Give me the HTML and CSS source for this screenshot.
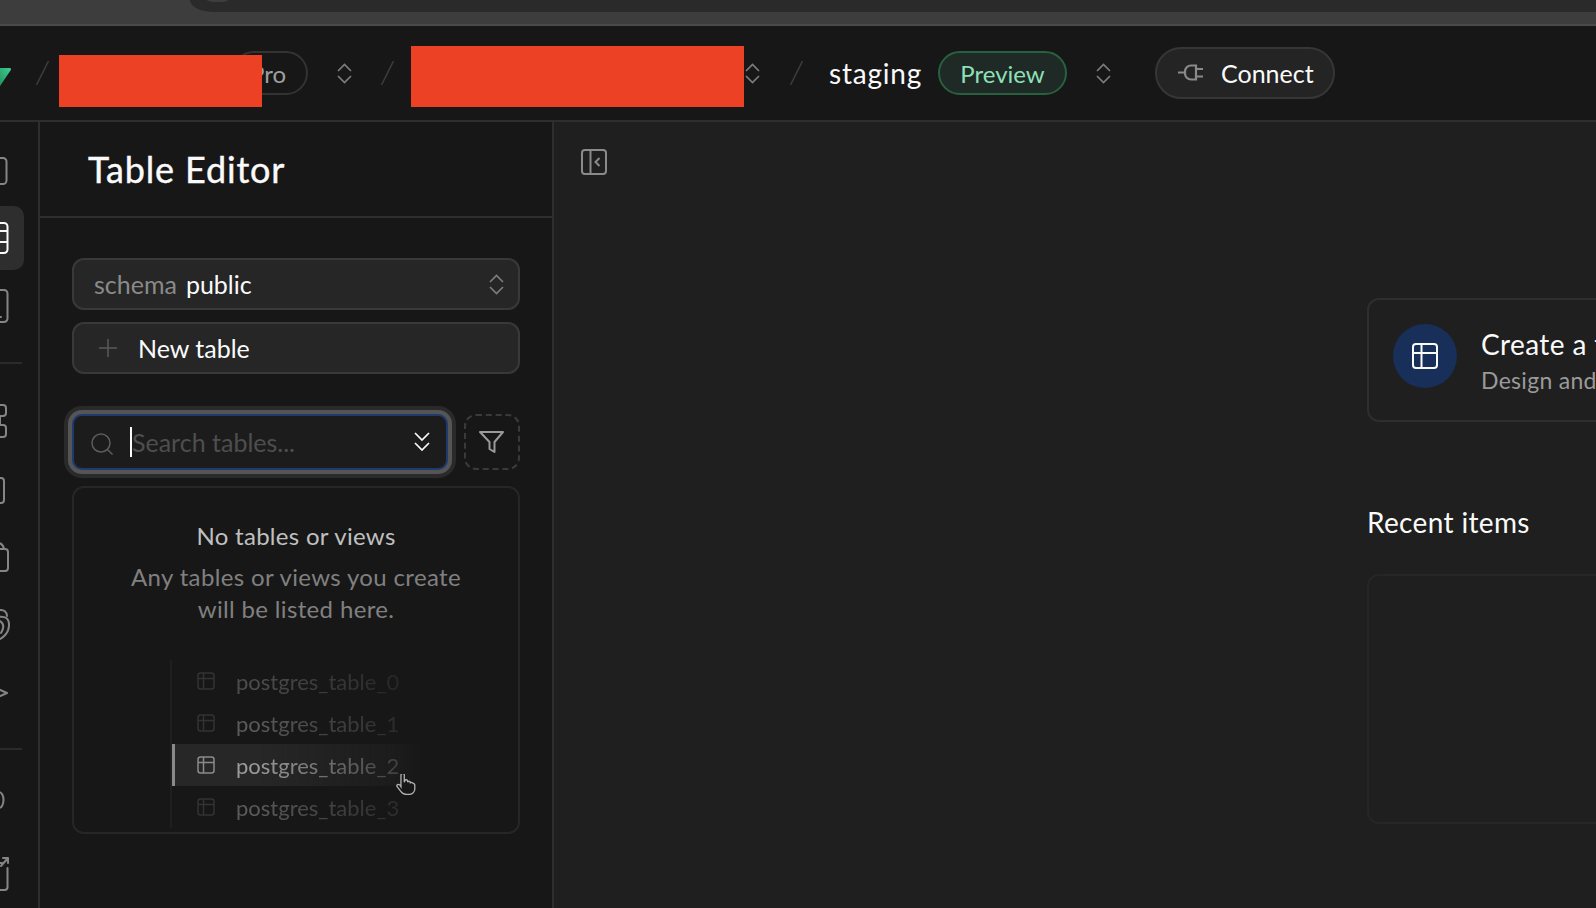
FILE: index.html
```html
<!DOCTYPE html>
<html lang="en">
<head>
<meta charset="utf-8">
<title>Table Editor</title>
<link rel="stylesheet" href="styles.css">
</head>
<body>
<div class="chrome"><div class="chrome-pill"></div></div>
<header class="topbar">
  <svg class="logo" viewBox="0 0 11 18"><defs><linearGradient id="g" x1="0" y1="1" x2="1" y2="0"><stop offset="0" stop-color="#249361"/><stop offset="1" stop-color="#3ecf8e"/></linearGradient></defs><path d="M0 0H9.500Q12 0 10.500 2.500L0 18Z" fill="url(#g)"/></svg>
  <svg class="slash slash-a" viewBox="0 0 13 24"><path d="M12.500 0L.5 24"/></svg>
  <span class="pill pill-pro">Pro</span>
  <svg class="updown updown-a" viewBox="0 0 15 21"><path d="M1 8L7.500 1.500L14 8M1 13L7.500 19.500L14 13"/></svg>
  <svg class="slash slash-b" viewBox="0 0 13 24"><path d="M12.500 0L.5 24"/></svg>
  <svg class="updown updown-b" viewBox="0 0 15 21"><path d="M1 8L7.500 1.500L14 8M1 13L7.500 19.500L14 13"/></svg>
  <svg class="slash slash-c" viewBox="0 0 13 24"><path d="M12.500 0L.5 24"/></svg>
  <span class="branch">staging</span>
  <span class="pill pill-preview">Preview</span>
  <svg class="updown updown-c" viewBox="0 0 15 21"><path d="M1 8L7.500 1.500L14 8M1 13L7.500 19.500L14 13"/></svg>
  <button class="connect">
    <svg class="plug" viewBox="0 0 26 18"><path d="M0 8.500H7M18 1.500H13a6 6 0 0 0-6 6v2a6 6 0 0 0 6 6h5zM18 5H25M18 12.500H25"/></svg>
    <span>Connect</span>
  </button>
  <div class="redact redact-a"></div>
  <div class="redact redact-b"></div>
</header>
<div class="layout">
  <nav class="rail">
    <div class="rail-group">
      <div class="rail-item"><svg class="rail-icon" viewBox="0 0 10 40"><path d="M-2 7H3a3.500 3.500 0 0 1 3.500 3.500V29.500a3.500 3.500 0 0 1-3.500 3.500H-2"/></svg></div>
      <div class="rail-item is-active"><svg class="rail-icon" viewBox="0 0 10 40"><path d="M-2 5H4a3.500 3.500 0 0 1 3.500 3.500V31.500a3.500 3.500 0 0 1-3.500 3.500H-2M-2 13H7.500M-2 24H7.500"/></svg></div>
      <div class="rail-item"><svg class="rail-icon" viewBox="0 0 10 40"><path d="M-2 5H4a3.500 3.500 0 0 1 3.500 3.500V33.500a3.500 3.500 0 0 1-3.500 3.500H-2M-1 32H1"/></svg></div>
    </div>
    <div class="rail-sep rail-sep-a"></div>
    <div class="rail-group rail-group-wide">
      <div class="rail-item"><svg class="rail-icon" viewBox="0 0 10 40"><path d="M0 4H3a3 3 0 0 1 3 3V12a3 3 0 0 1-3 3H0M0 15V24M0 24H3a3 3 0 0 1 3 3V33a3 3 0 0 1-3 3H0"/></svg></div>
      <div class="rail-item"><svg class="rail-icon" viewBox="0 0 10 40"><path d="M-2 9H1a3 3 0 0 1 3 3V31a3 3 0 0 1-3 3H-2"/></svg></div>
      <div class="rail-item"><svg class="rail-icon" viewBox="0 0 10 40"><path d="M-2 6Q3 6 4 12M-2 12H5a3 3 0 0 1 3 3V31a3 3 0 0 1-3 3H-2"/></svg></div>
      <div class="rail-item"><svg class="rail-icon" viewBox="0 0 10 40"><path d="M0 5a6 6 0 0 1 7 6M-2 12Q9 10 9 20C9 28 3 33 -2 35M0 16Q6 20 1 28"/></svg></div>
      <div class="rail-item"><svg class="rail-icon" viewBox="0 0 10 40"><path d="M-2 16L7 20L-2 24"/></svg></div>
    </div>
    <div class="rail-sep rail-sep-b"></div>
    <div class="rail-item rail-item-foot"><svg class="rail-icon" viewBox="0 0 10 40"><path d="M-1 12a4.500 8 0 0 1 0 16"/></svg></div>
    <div class="rail-item rail-item-last"><svg class="rail-icon" viewBox="0 0 10 40"><path d="M7.500 14V33a3 3 0 0 1-3 3H-2M-2 9H2M1 12L8 4M3 4H8V9"/></svg></div>
  </nav>

  <aside class="panel">
    <div class="panel-head"><h1 class="panel-title">Table Editor</h1></div>
    <div class="panel-body">
      <div class="field">
        <span class="field-label">schema</span><span class="field-value">public</span>
        <svg class="updown field-chev" viewBox="0 0 15 21"><path d="M1 8L7.500 1.500L14 8M1 13L7.500 19.500L14 13"/></svg>
      </div>
      <div class="field field-new">
        <svg class="plus" viewBox="0 0 18 18"><path d="M9 0V18M0 9H18"/></svg>
        <span class="field-value">New table</span>
      </div>
      <div class="search-row">
        <div class="search">
          <svg class="search-icon" viewBox="0 0 22 22"><circle cx="10" cy="10" r="9"/><path d="M16.500 16.500L21.500 21.500"/></svg>
          <span class="caret"></span>
          <span class="placeholder">Search tables...</span>
          <svg class="dbl-chev" viewBox="0 0 16 19"><path d="M1 1L8 8L15 1M1 11L8 18L15 11"/></svg>
        </div>
        <button class="filter"><svg class="filter-icon" viewBox="0 0 25 22"><path d="M1 1H24L15.500 11V21L10.500 18V11Z"/></svg></button>
      </div>
      <section class="empty">
        <p class="empty-title">No tables or views</p>
        <p class="empty-text">Any tables or views you create<br>will be listed here.</p>
        <div class="ghost-wrap">
          <ul class="ghost-list">
            <li class="ghost ghost-dim"><svg class="tbl" viewBox="0 0 18 18"><use href="#tbl-shape"/></svg><span>postgres_table_0</span></li>
            <li class="ghost"><svg class="tbl" viewBox="0 0 18 18"><use href="#tbl-shape"/></svg><span>postgres_table_1</span></li>
            <li class="ghost ghost-hover"><svg class="tbl" viewBox="0 0 18 18"><use href="#tbl-shape"/></svg><span>postgres_table_2</span></li>
            <li class="ghost"><svg class="tbl" viewBox="0 0 18 18"><use href="#tbl-shape"/></svg><span>postgres_table_3</span></li>
          </ul>
          <svg class="hand" viewBox="1 1.500 18 19"><path d="M5 13V2.500a1.500 1.500 0 0 1 3 0V9l.5-1.500a1.300 1.300 0 0 1 2.500.5V9a1.300 1.300 0 0 1 2.500 0v1a1.300 1.300 0 0 1 2.500 0c1 0 1.500 1 1.500 2v3c0 3-2.500 5-5.500 5H10c-3 0-4-1-5-2.500L1.500 13c-.7-1.500 1-3 2.500-1.500z"/></svg>
        </div>
      </section>
    </div>
  </aside>

  <main class="main">
    <svg class="collapse" viewBox="0 0 26 26"><rect x="1" y="1" width="24" height="24" rx="3"/><path d="M9.500 1V25M18.500 9L14.500 13L18.500 17"/></svg>
    <div class="content">
      <div class="card">
        <div class="card-badge"><svg class="card-icon" viewBox="0 0 26 26"><rect x="1" y="1" width="24" height="24" rx="3"/><path d="M1 10H25M9.500 1V25"/></svg></div>
        <div class="card-copy">
          <div class="card-title">Create a table</div>
          <div class="card-sub">Design and create a new database table</div>
        </div>
      </div>
      <h2 class="recent-title">Recent items</h2>
      <div class="recent-box"></div>
    </div>
  </main>
</div>
<svg class="defs" width="0" height="0"><symbol id="tbl-shape" viewBox="0 0 18 18"><rect x="1" y="1" width="16" height="16" rx="2.500"/><path d="M1 6.500H17M6.500 1V17"/></symbol></svg>
</body>
</html>
```
FILE: styles.css
```css
* { box-sizing: border-box; }
html, body { margin: 0; padding: 0; height: 100%; }
body {
  width: 1596px;
  height: 908px;
  overflow: hidden;
  background: #1f1f1f;
  color: #fafafa;
  font-family: "Lato", "Liberation Sans", sans-serif;
  display: flex;
  flex-direction: column;
}
svg { display: block; flex: none; fill: none; }
.defs { position: absolute; }

.chrome {
  height: 26px;
  flex: none;
  background: #3d3d3d;
  border-bottom: 2px solid #4a4a4a;
  padding-left: 190px;
}
.chrome-pill {
  position: relative;
  height: 12px;
  background: #2a2a2a;
  border-bottom-left-radius: 24px 12px;
}
.chrome-pill::before {
  content: "";
  position: absolute;
  left: 17px;
  top: 0;
  width: 21px;
  height: 2px;
  background: #3e3e3e;
  border-radius: 0 0 10px 10px / 0 0 2px 2px;
}

.topbar {
  height: 96px;
  flex: none;
  position: relative;
  display: flex;
  align-items: center;
  background: #171717;
  border-bottom: 2px solid #2e2e2e;
}
.logo { width: 11px; height: 18px; margin-top: 8px; }
.slash { width: 13px; height: 24px; }
.slash path { stroke: #3c3c3c; stroke-width: 1.500; }
.slash-a { margin-left: 25px; }
.slash-b { margin-left: 29px; }
.slash-c { margin-left: 30px; }
.updown { width: 15px; height: 21px; }
.updown path { stroke: #7c7c7c; stroke-width: 1.700; }
.updown-a { margin-left: 29px; }
.updown-b { margin-left: 351px; }
.updown-c { margin-left: 29px; }

.pill {
  height: 44px;
  border-radius: 22px;
  border: 2px solid #333;
  display: flex;
  align-items: center;
  font-size: 24px;
}
.pill-pro {
  margin-left: 183px;
  width: 76px;
  justify-content: flex-end;
  padding-right: 20px;
  color: #a0a0a0;
}
.pill-preview {
  margin-left: 17px;
  width: 129px;
  justify-content: center;
  background: #1f2926;
  border-color: #27613f;
  color: #8ee0b6;
}
.branch { margin-left: 26px; width: 92px; font-size: 28px; letter-spacing: .8px; white-space: nowrap; color: #fafafa; }
.connect {
  margin-left: 44px;
  width: 180px;
  height: 52px;
  display: flex;
  align-items: center;
  gap: 17px;
  padding: 0 0 0 21px;
  border-radius: 26px;
  border: 2px solid #363636;
  background: #242424;
  color: #fafafa;
  font: inherit;
  font-size: 25px;
}
.plug { width: 26px; height: 18px; }
.plug path { stroke: #8a8a8a; stroke-width: 2.200; }
.redact { position: absolute; background: #ec4125; }
.redact-a { left: 59px; top: 29px; width: 203px; height: 52px; }
.redact-b { left: 411px; top: 20px; width: 333px; height: 61px; }

.layout { flex: 1; display: flex; min-height: 0; }

.rail {
  width: 40px;
  flex: none;
  overflow: hidden;
  background: #171717;
  border-right: 2px solid #2e2e2e;
  padding-top: 17px;
}
.rail-group { display: flex; flex-direction: column; gap: 3px; }
.rail-group-wide { gap: 4px; }
.rail-item {
  width: 24px;
  height: 64px;
  display: flex;
  align-items: center;
  border-radius: 0 10px 10px 0;
}
.rail-item.is-active { background: #2e2e2e; }
.rail-icon { width: 10px; height: 40px; }
.rail-icon path { stroke: #858585; stroke-width: 2; stroke-linecap: round; stroke-linejoin: round; }
.is-active .rail-icon path { stroke: #fafafa; }
.rail-sep { width: 22px; height: 2px; background: #2a2a2a; }
.rail-sep-a { margin: 25px 0; }
.rail-sep-b { margin-top: 23px; margin-bottom: 18px; }
.rail-item-last { margin-top: 10px; }

.panel {
  width: 514px;
  flex: none;
  background: #171717;
  border-right: 2px solid #2e2e2e;
}
.panel-head {
  height: 96px;
  display: flex;
  align-items: center;
  padding: 0 0 0 48px;
  border-bottom: 2px solid #2e2e2e;
}
.panel-title {
  margin: 0;
  font-size: 36px;
  letter-spacing: .85px;
  font-weight: 400;
  -webkit-text-stroke: .4px #fafafa;
  color: #fafafa;
}
.panel-body { padding: 40px 32px 0; }

.field {
  height: 52px;
  display: flex;
  align-items: center;
  padding: 0 14px 0 20px;
  background: #262626;
  border: 2px solid #393939;
  border-radius: 12px;
  font-size: 25px;
}
.field-label { color: #8a8a8a; margin-right: 9px; }
.field-value { color: #fafafa; }
.field-chev { margin-left: auto; }
.field-new { margin-top: 12px; padding-left: 25px; }
.plus { width: 18px; height: 18px; margin-right: 21px; }
.plus path { stroke: #5a5a5a; stroke-width: 1.500; }

.search-row { display: flex; gap: 16px; margin-top: 40px; }
.search {
  width: 376px;
  height: 56px;
  display: flex;
  align-items: center;
  padding: 0 16px 0 17px;
  background: #1c1c1c;
  border: 2px solid #1e3a6e;
  border-radius: 10px;
  box-shadow: 0 0 0 4px #555, 0 0 0 8px #2a2a2a;
}
.search-icon { width: 22px; height: 22px; margin-top: 4px; }
.search-icon circle, .search-icon path { stroke: #5c5c5c; stroke-width: 1.500; }
.caret { width: 2px; height: 30px; background: #fafafa; margin-left: 17px; }
.placeholder { font-size: 25px; color: #4e4e4e; }
.dbl-chev { width: 16px; height: 19px; margin: 0 0 2px auto; }
.dbl-chev path { stroke: #fafafa; stroke-width: 1.700; }
.filter {
  width: 56px;
  height: 56px;
  padding: 0 2px 0 0;
  display: flex;
  align-items: center;
  justify-content: center;
  background: transparent;
  border: 2px dashed #3a3a3a;
  border-radius: 12px;
}
.filter-icon { width: 25px; height: 22px; }
.filter-icon path { stroke: #9a9a9a; stroke-width: 2; stroke-linejoin: round; }

.empty {
  margin-top: 16px;
  height: 348px;
  padding-top: 32px;
  border: 2px solid #262626;
  border-radius: 12px;
  text-align: center;
  overflow: hidden;
}
.empty-title { margin: 0; font-size: 24px; line-height: 32px; letter-spacing: .3px; color: #c0c0c0; }
.empty-text { margin: 9px 0 0; font-size: 24px; line-height: 32px; letter-spacing: .35px; color: #808080; }
.ghost-wrap { position: relative; margin: 35px 0 0 96px; width: 254px; }
.ghost-list {
  margin: 0;
  padding: 0;
  list-style: none;
  text-align: left;
  border-left: 2px solid #1f1f1f;
  -webkit-mask-image: linear-gradient(90deg, #000 35%, rgba(0,0,0,.3) 90%, transparent 100%);
  mask-image: linear-gradient(90deg, #000 35%, rgba(0,0,0,.3) 90%, transparent 100%);
}
.ghost {
  height: 42px;
  display: flex;
  align-items: center;
  gap: 21px;
  padding-left: 25px;
  font-size: 22px;
  color: #5a5a5a;
}
.ghost-dim { color: #4c4c4c; }
.tbl { width: 18px; height: 18px; }
.tbl use { stroke: #333; stroke-width: 1.500; }
.ghost-hover {
  background: #272727;
  border-left: 3px solid #8a8a8a;
  padding-left: 22px;
  color: #9a9a9a;
}
.ghost-hover .tbl use { stroke: #8a8a8a; }
.hand { position: absolute; left: 226px; top: 114px; width: 21px; height: 21px; }
.hand path { fill: #171717; stroke: #b0b0b0; stroke-width: 1.200; }

.main { flex: 1; min-width: 0; overflow: hidden; padding: 27px 0 0 27px; background: #1f1f1f; }
.collapse { width: 26px; height: 26px; }
.collapse rect, .collapse path { stroke: #8a8a8a; stroke-width: 2; }
.content { margin: 123px 0 0 786px; width: 700px; }
.card {
  height: 124px;
  display: flex;
  align-items: flex-start;
  gap: 24px;
  padding: 24px 0 0 24px;
  border: 2px solid #2e2e2e;
  border-radius: 12px;
}
.card-badge {
  width: 64px;
  height: 64px;
  display: flex;
  align-items: center;
  justify-content: center;
  border-radius: 50%;
  background: #172f59;
}
.card-icon { width: 26px; height: 26px; }
.card-icon rect, .card-icon path { stroke: #fafafa; stroke-width: 2; }
.card-copy { padding-top: 2px; }
.card-title { font-size: 28px; line-height: 36px; letter-spacing: .4px; color: #fafafa; white-space: nowrap; }
.card-sub { font-size: 23px; line-height: 36px; letter-spacing: .3px; color: #9a9a9a; white-space: nowrap; }
.recent-title { margin: 82px 0 0; font-size: 28px; line-height: 36px; letter-spacing: .35px; font-weight: 400; color: #fafafa; }
.recent-box { margin-top: 34px; height: 250px; border: 2px solid #262626; border-radius: 12px; }
```
